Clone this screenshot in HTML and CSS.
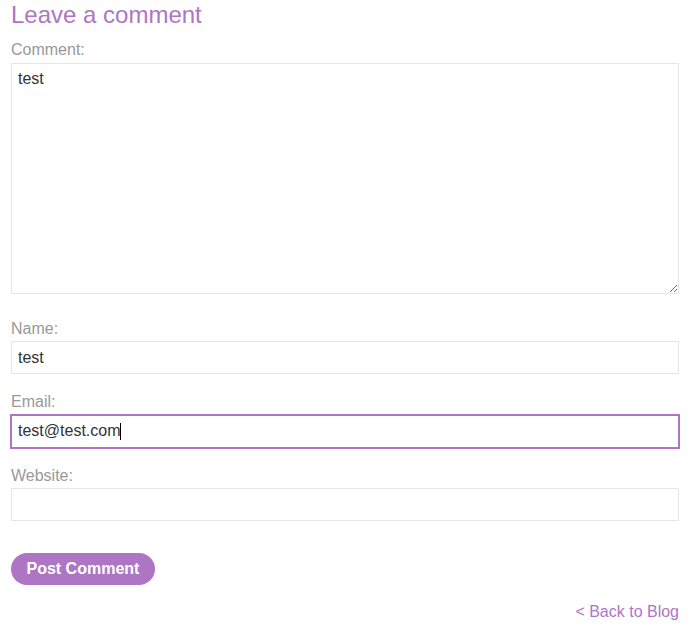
FILE: index.html
```html
<!DOCTYPE html>
<html lang="en">
<head>
<meta charset="utf-8">
<title>Leave a comment</title>
<link rel="stylesheet" href="styles.css">
</head>
<body>
<section class="comment-form">
  <h1 class="title">Leave a comment</h1>
  <form class="form">
    <label class="label" for="comment">Comment:</label>
    <textarea class="field area" id="comment" name="comment">test</textarea>
    <label class="label" for="name">Name:</label>
    <input class="field" id="name" type="text" value="test">
    <label class="label" for="email">Email:</label>
    <div class="caret-wrap">
      <input class="field focused" id="email" type="email" value="test@test.com">
      <span class="caret"></span>
    </div>
    <label class="label" for="website">Website:</label>
    <input class="field" id="website" type="text" value="">
    <div class="actions">
      <button class="button" type="button">Post Comment</button>
    </div>
  </form>
  <div class="back"><a class="back-link" href="#">&lt; Back to Blog</a></div>
</section>
</body>
</html>
```
FILE: styles.css
```css
html, body {
  margin: 0;
  padding: 0;
  background: #fff;
}
body {
  font-family: "Liberation Sans", Arial, sans-serif;
  font-size: 16px;
  color: #333;
}
.comment-form {
  width: 668px;
  margin-left: 11px;
  padding-top: 1px;
}
.title {
  margin: 0 0 12px 0;
  font-size: 24px;
  font-weight: normal;
  line-height: 27.6px;
  color: #ae75c5;
}
.form {
  display: flex;
  flex-direction: column;
  margin: 0;
}
.label {
  display: block;
  color: #999;
  line-height: 18.4px;
  margin-bottom: 3px;
}
.label:first-child {
  margin-bottom: 4px;
}
.field {
  display: block;
  box-sizing: border-box;
  width: 100%;
  height: 33px;
  margin: 0 0 19px 0;
  padding: 0 6px;
  border: 1px solid #e6e6e6;
  border-radius: 0;
  background: #fff;
  font-family: "Liberation Sans", Arial, sans-serif;
  font-size: 16px;
  color: #333;
  outline: none;
}
.area {
  height: 231px;
  padding: 6px 6px 4px;
  line-height: 18.4px;
  margin-bottom: 26px;
  resize: both;
}
.caret-wrap {
  position: relative;
  margin-bottom: 19px;
}
.caret-wrap .field {
  margin-bottom: 0;
}
.focused {
  border-color: #ae75c5;
  outline: 1px solid #ae75c5;
}
.caret {
  position: absolute;
  left: 109px;
  top: 8px;
  width: 1px;
  height: 17px;
  background: #000;
}
.actions {
  padding-top: 13px;
}
.button {
  display: inline-block;
  height: 32px;
  padding: 0 15.5px;
  border: none;
  border-radius: 16px;
  background: #ae75c5;
  color: #fff;
  font-family: "Liberation Sans", Arial, sans-serif;
  font-size: 16px;
  font-weight: bold;
  cursor: pointer;
}
.back {
  text-align: right;
  margin-top: 18px;
  line-height: 18.4px;
}
.back-link {
  color: #ae75c5;
  text-decoration: none;
}
```
